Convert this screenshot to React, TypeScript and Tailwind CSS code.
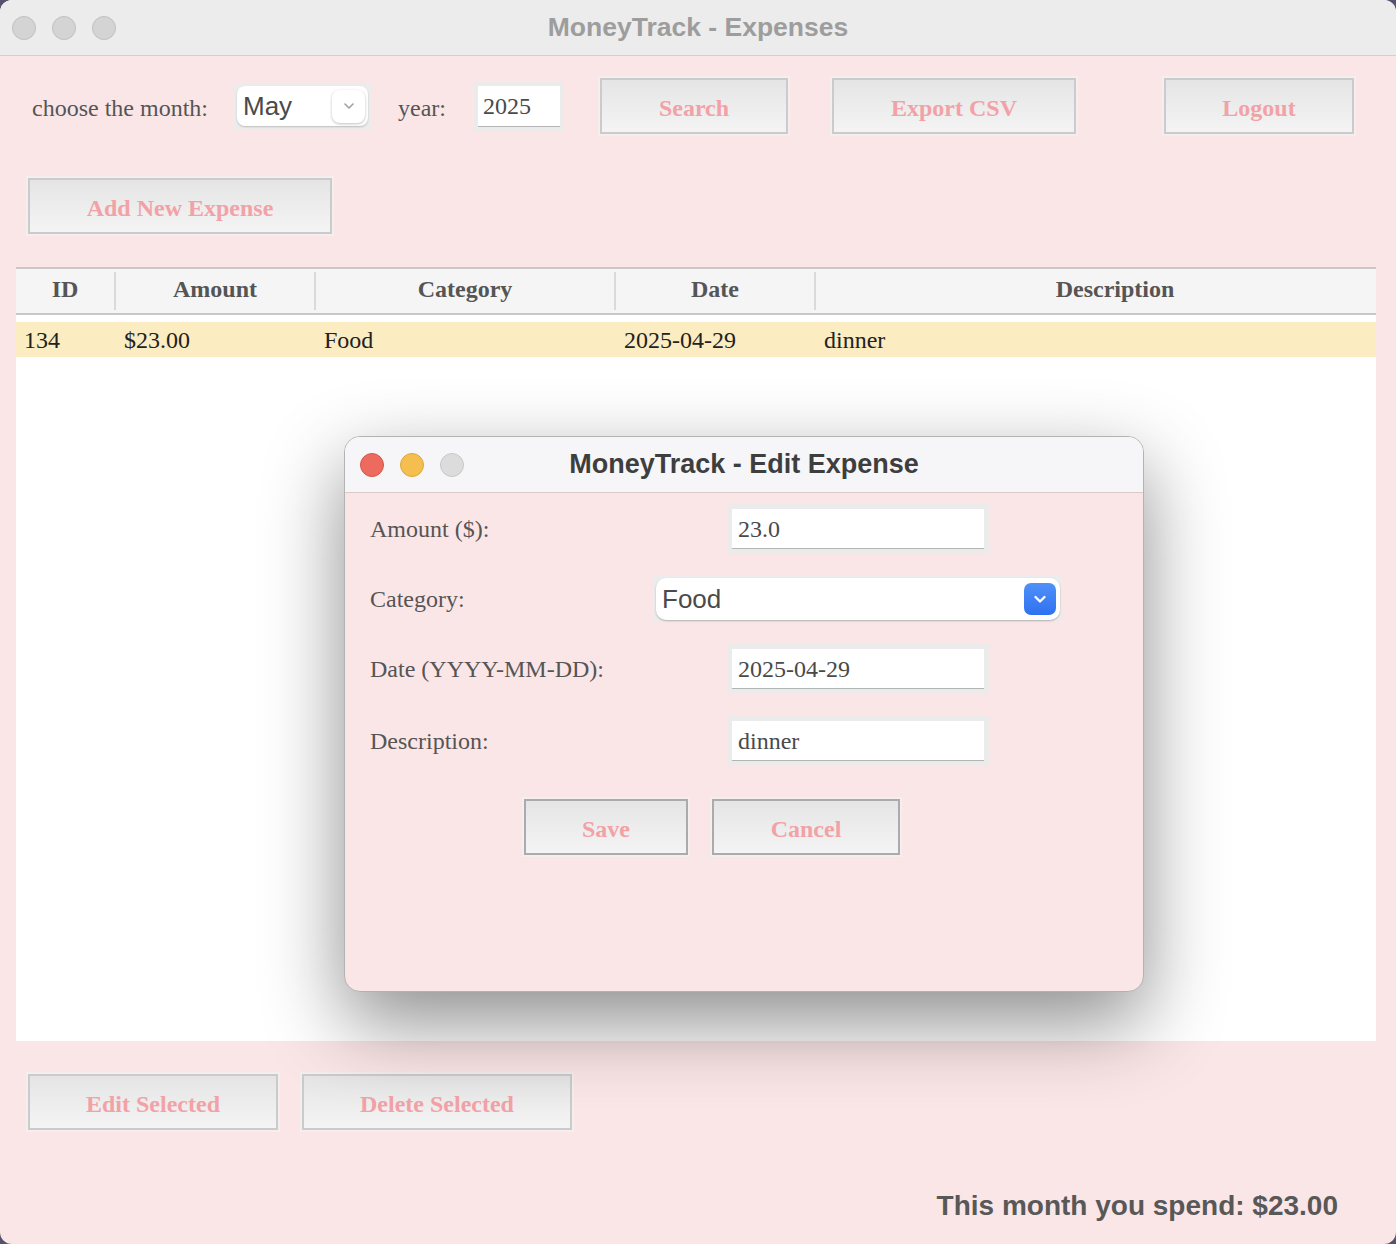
import React from "react";

const SERIF = "font-['Liberation_Serif',serif]";
const SANS = "font-['Liberation_Sans',Arial,sans-serif]";

type BtnProps = { label: string; width: string; dark?: boolean };

const SwingButton = ({ label, width, dark }: BtnProps) => (
  <div
    className={`${width} h-[56px] shrink-0 flex items-center justify-center pt-[3px] border-2 ${
      dark ? "border-[#ababab]" : "border-[#cbcbcb]"
    } bg-gradient-to-b from-[#e5e5e5] to-[#f4f4f4] shadow-[0_0_0_2px_#f4eeee] text-[24px] font-bold text-[#f2a2a6] ${SERIF}`}
  >
    {label}
  </div>
);

const TextField = ({ value, width, height }: { value: string; width: string; height: string }) => (
  <div className={`${width} ${height} shrink-0 p-[5px] bg-[#ebebeb]`}>
    <div className={`h-full bg-white border-b border-[#b4b4b4] flex items-center pl-[6px] text-[24px] text-[#4a4a4a] ${SERIF}`}>
      {value}
    </div>
  </div>
);

const Light = ({ color }: { color: string }) => (
  <div className={`w-[24px] h-[24px] rounded-full border ${color}`} />
);

const headerCols = [
  { label: "ID", w: "w-[98px]" },
  { label: "Amount", w: "w-[198px]" },
  { label: "Category", w: "w-[298px]" },
  { label: "Date", w: "w-[198px]" },
  { label: "Description", w: "w-[598px]" },
];

const rowCells = [
  { v: "134", w: "w-[100px]" },
  { v: "$23.00", w: "w-[200px]" },
  { v: "Food", w: "w-[300px]" },
  { v: "2025-04-29", w: "w-[200px]" },
  { v: "dinner", w: "flex-1" },
];

export default function App() {
  return (
    <div className="w-[1396px] h-[1244px] bg-[#56516c] overflow-hidden">
      <div className="relative w-full h-full rounded-[12px] overflow-hidden bg-[#fbe6e7] flex flex-col">
        {/* Main title bar */}
        <div className="h-[56px] shrink-0 bg-[#ececec] border-b border-[#dccccc] grid grid-cols-[1fr_auto_1fr] items-center">
          <div className="flex gap-[16px] pl-[12px]">
            <Light color="bg-[#d4d4d4] border-[#c0c0c0]" />
            <Light color="bg-[#d4d4d4] border-[#c0c0c0]" />
            <Light color="bg-[#d4d4d4] border-[#c0c0c0]" />
          </div>
          <div className={`text-[26.5px] font-bold text-[#9d9d9d] ${SANS}`}>MoneyTrack - Expenses</div>
          <div />
        </div>

        {/* Toolbar */}
        <div className="mt-[22px] h-[56px] pl-[32px] flex items-center">
          <span className={`w-[202px] shrink-0 pt-[3px] text-[24px] text-[#555] ${SERIF}`}>choose the month:</span>
          <div className="w-[137px] h-[46px] shrink-0 p-[3px] bg-[#ececec]">
            <div className="h-full rounded-[8px] bg-white shadow-[0_1px_2px_rgba(0,0,0,0.2)] flex items-center justify-between pl-[6px] pr-[3px]">
              <span className={`text-[26px] text-[#4a4a4a] ${SANS}`}>May</span>
              <div className="w-[33px] h-[33px] rounded-[8px] bg-white shadow-[0_1px_3px_rgba(0,0,0,0.25)] flex items-center justify-center">
                <svg width="14" height="10" viewBox="0 0 14 10" fill="none">
                  <path d="M3 3l4 4 4-4" stroke="#a0a0a0" strokeWidth="1.6" strokeLinecap="round" strokeLinejoin="round" />
                </svg>
              </div>
            </div>
          </div>
          <span className={`ml-[27px] w-[76px] shrink-0 pt-[3px] text-[24px] text-[#555] ${SERIF}`}>year:</span>
          <div className="w-[90px] h-[49px] shrink-0 p-[4px] bg-[#ebebeb]">
            <div className={`h-full bg-white border-b border-[#b4b4b4] flex items-center pl-[5px] text-[24px] text-[#4a4a4a] ${SERIF}`}>
              2025
            </div>
          </div>
          <div className="ml-[36px]">
            <SwingButton label="Search" width="w-[188px]" />
          </div>
          <div className="ml-[44px]">
            <SwingButton label="Export CSV" width="w-[244px]" />
          </div>
          <div className="ml-[88px]">
            <SwingButton label="Logout" width="w-[190px]" />
          </div>
        </div>

        {/* Add button */}
        <div className="mt-[44px] ml-[28px]">
          <SwingButton label="Add New Expense" width="w-[304px]" />
        </div>

        {/* Table */}
        <div className="ml-[16px] mr-[20px] mt-[33px] h-[774px] shrink-0 bg-white overflow-hidden flex flex-col">
          <div className="h-[48px] shrink-0 flex bg-[#f5f5f5] border-y-2 border-[#c8c8c8]">
            {headerCols.map((c, i) => (
              <React.Fragment key={c.label}>
                {i > 0 && <div className="w-[2px] shrink-0 my-[3px] bg-[#dadada]" />}
                <div className={`${c.w} shrink-0 flex items-center justify-center pb-[5px] text-[24px] font-bold text-[#555] ${SERIF}`}>
                  {c.label}
                </div>
              </React.Fragment>
            ))}
          </div>
          <div className="mt-[7px] h-[35px] flex items-center bg-[#fbecc1]">
            {rowCells.map((c) => (
              <div key={c.v} className={`${c.w} pl-[8px] text-[24px] text-[#222] ${SERIF}`}>
                {c.v}
              </div>
            ))}
          </div>
        </div>

        {/* Bottom buttons */}
        <div className="mt-[33px] ml-[28px] flex gap-[24px]">
          <SwingButton label="Edit Selected" width="w-[250px]" />
          <SwingButton label="Delete Selected" width="w-[270px]" />
        </div>

        <div className={`mt-[60px] self-end pr-[58px] leading-[32px] text-[28px] font-bold text-[#585858] ${SANS}`}>
          This month you spend: $23.00
        </div>

        {/* Edit dialog */}
        <div className="absolute left-[344px] top-[436px] w-[800px] h-[556px] rounded-[16px] border border-[#b3b3b3] bg-[#fbe6e7] overflow-hidden shadow-[0_30px_80px_rgba(0,0,0,0.45)] flex flex-col">
          <div className="h-[56px] shrink-0 bg-[#f6f6f8] border-b border-[#dccaca] grid grid-cols-[1fr_auto_1fr] items-center">
            <div className="flex gap-[16px] pl-[15px]">
              <Light color="bg-[#ec6a5e] border-[#d6564b]" />
              <Light color="bg-[#f4bf4f] border-[#dea63a]" />
              <Light color="bg-[#dcdcdc] border-[#c8c8c8]" />
            </div>
            <div className={`text-[27px] font-bold text-[#3e3e3e] ${SANS}`}>MoneyTrack - Edit Expense</div>
            <div />
          </div>

          <div className="pt-[11px] pl-[25px] flex flex-col">
            <div className="h-[50px] flex items-center">
              <span className={`w-[357px] shrink-0 text-[24px] text-[#555] ${SERIF}`}>Amount ($):</span>
              <TextField value="23.0" width="w-[262px]" height="h-[50px]" />
            </div>

            <div className="mt-[22px] h-[46px] flex items-center">
              <span className={`w-[284px] shrink-0 text-[24px] text-[#555] ${SERIF}`}>Category:</span>
              <div className="w-[408px] h-[46px] shrink-0 p-[2px] bg-[#ececec]">
                <div className="h-full rounded-[10px] bg-white shadow-[0_1px_2px_rgba(0,0,0,0.25)] flex items-center justify-between pl-[6px] pr-[4px]">
                  <span className={`text-[26px] text-[#4a4a4a] ${SANS}`}>Food</span>
                  <div className="w-[32px] h-[32px] rounded-[7px] bg-gradient-to-b from-[#4f91fa] to-[#2e71ef] flex items-center justify-center">
                    <svg width="16" height="16" viewBox="0 0 16 16" fill="none">
                      <path d="M3.5 6L8 10.5 12.5 6" stroke="#ffffff" strokeWidth="2.4" strokeLinecap="round" strokeLinejoin="round" />
                    </svg>
                  </div>
                </div>
              </div>
            </div>

            <div className="mt-[22px] h-[50px] flex items-center">
              <span className={`w-[357px] shrink-0 text-[24px] text-[#555] ${SERIF}`}>Date (YYYY-MM-DD):</span>
              <TextField value="2025-04-29" width="w-[262px]" height="h-[50px]" />
            </div>

            <div className="mt-[22px] h-[50px] flex items-center">
              <span className={`w-[357px] shrink-0 text-[24px] text-[#555] ${SERIF}`}>Description:</span>
              <TextField value="dinner" width="w-[262px]" height="h-[50px]" />
            </div>

            <div className="mt-[33px] ml-[154px] flex gap-[24px]">
              <SwingButton label="Save" width="w-[164px]" dark />
              <SwingButton label="Cancel" width="w-[188px]" dark />
            </div>
          </div>
        </div>
      </div>
    </div>
  );
}
